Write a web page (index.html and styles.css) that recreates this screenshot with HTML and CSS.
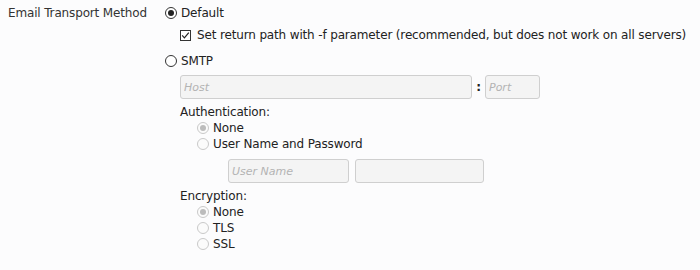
FILE: index.html
```html
<!DOCTYPE html>
<html lang="en">
<head>
    <meta charset="UTF-8">
    <title>Email Transport Method</title>
    <link rel="stylesheet" href="styles.css">
</head>
<body>

<div class="row">
    <div class="label">Email Transport Method</div>

    <div class="options">

        <div class="choice">
            <span class="radio checked"></span>
            <span>Default</span>
        </div>

        <div class="choice sub top-check">
            <span class="check">
                <svg width="11" height="11" viewBox="0 0 11 11">
                    <rect x="0.5" y="0.5" width="10" height="10" fill="#fff" stroke="#333"/>
                    <path d="M2.2 5.4 L4.4 7.8 L8.8 2.6" fill="none" stroke="#222" stroke-width="1.2"/>
                </svg>
            </span>
            <span>Set return path with -f parameter (recommended, but does not work on all servers)</span>
        </div>

        <div class="choice smtp">
            <span class="radio"></span>
            <span>SMTP</span>
        </div>

        <div class="smtp-box">

            <div class="hostline">
                <input class="field host" type="text" placeholder="Host">
                <span class="colon">:</span>
                <input class="field port" type="text" placeholder="Port">
            </div>

            <div class="group-title auth">Authentication:</div>
            <div class="choice small">
                <span class="radio off checked"></span>
                <span>None</span>
            </div>
            <div class="choice small">
                <span class="radio off"></span>
                <span>User Name and Password</span>
            </div>

            <div class="userline">
                <input class="field user" type="text" placeholder="User Name">
                <input class="field pass" type="password">
            </div>

            <div class="group-title enc">Encryption:</div>
            <div class="choice small">
                <span class="radio off checked"></span>
                <span>None</span>
            </div>
            <div class="choice small">
                <span class="radio off"></span>
                <span>TLS</span>
            </div>
            <div class="choice small">
                <span class="radio off"></span>
                <span>SSL</span>
            </div>

        </div>
    </div>
</div>

</body>
</html>
```
FILE: styles.css
```css
body {
    margin: 0;
    background-color: #fcfcfd;
    color: #222;
    font-family: "DejaVu Sans", sans-serif;
    font-size: 12px;
    letter-spacing: -0.15px;
}

.row {
    display: flex;
    padding-top: 4px;
}

.label {
    width: 157px;
    padding-left: 8px;
    line-height: 18px;
    color: #333;
}

.options {
    display: flex;
    flex-direction: column;
}

.choice {
    display: flex;
    align-items: center;
    gap: 4px;
    height: 18px;
}

.top-check {
    margin-top: 4px;
    padding-left: 15px;
    gap: 6px;
}

.smtp {
    margin-top: 8px;
}

.radio {
    width: 10px;
    height: 10px;
    border: 1px solid #333;
    border-radius: 50%;
    background-color: #fff;
    position: relative;
}

.radio.checked::after {
    content: "";
    position: absolute;
    left: 2px;
    top: 2px;
    width: 6px;
    height: 6px;
    border-radius: 50%;
    background-color: #222;
}

.radio.off {
    border-color: #c9c9c9;
    background-color: #fbfbfb;
}

.radio.off.checked::after {
    background-color: #bcbcbc;
}

.check {
    display: flex;
}

.smtp-box {
    padding-left: 15px;
    margin-top: 5px;
}

.hostline, .userline {
    display: flex;
    align-items: center;
}

.field {
    box-sizing: border-box;
    height: 24px;
    margin: 0;
    padding: 0 3px;
    border: 1px solid #cfcfcf;
    border-radius: 3px;
    background-color: #f4f4f4;
    font-family: "DejaVu Sans", sans-serif;
    font-size: 11px;
    font-style: italic;
    outline: none;
}

.field::placeholder {
    color: #b3b3b3;
}

.host {
    width: 292px;
}

.colon {
    width: 13px;
    text-align: center;
    font-weight: bold;
}

.port {
    width: 55px;
}

.group-title {
    line-height: 16px;
}

.auth {
    margin-top: 5px;
}

.enc {
    margin-top: 5px;
}

.small {
    height: 16px;
    padding-left: 17px;
}

.userline {
    margin: 7px 0 0 48px;
    gap: 6px;
}

.user {
    width: 121px;
}

.pass {
    width: 129px;
}
```
